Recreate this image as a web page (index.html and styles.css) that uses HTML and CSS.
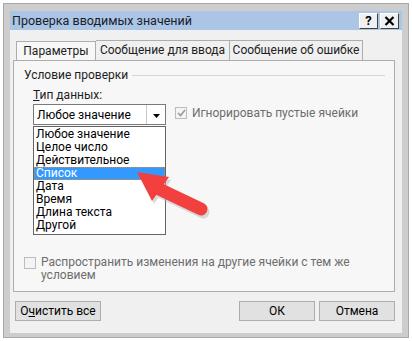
FILE: index.html
```html
<!DOCTYPE html>
<html lang="ru">
<head>
    <meta charset="UTF-8">
    <meta name="viewport" content="width=device-width, initial-scale=1.0">
    <title>Проверка вводимых значений</title>
    <link rel="stylesheet" href="styles.css">
</head>
<body>
    <div class="window">
        <div class="titlebar">
            <span class="title">Проверка вводимых значений</span>
            <div class="title-buttons">
                <span class="tbtn">?</span>
                <span class="tbtn">
                    <svg width="11" height="10" viewBox="0 0 11 10">
                        <path d="M1.5 1 L9.5 9 M9.5 1 L1.5 9" stroke="#000" stroke-width="2.2"/>
                    </svg>
                </span>
            </div>
        </div>

        <div class="client">
            <div class="tabs">
                <div class="tab active">Параметры</div>
                <div class="tab">Сообщение для ввода</div>
                <div class="tab">Сообщение об ошибке</div>
            </div>

            <div class="panel">
                <div class="group-title"><span>Условие проверки</span></div>
                <div class="type-label"><u>Т</u>ип данных:</div>

                <div class="type-row">
                    <div class="select-wrap">
                        <div class="select">
                            <span class="select-text">Любое значение</span>
                            <span class="select-btn">
                                <svg width="7" height="4" viewBox="0 0 7 4"><path d="M0 0 H7 L3.5 4 Z" fill="#000"/></svg>
                            </span>
                        </div>
                        <ul class="list">
                            <li>Любое значение</li>
                            <li>Целое число</li>
                            <li>Действительное</li>
                            <li class="selected">Список</li>
                            <li>Дата</li>
                            <li>Время</li>
                            <li>Длина текста</li>
                            <li>Другой</li>
                        </ul>
                    </div>
                    <div class="check disabled">
                        <span class="box">
                            <svg width="9" height="8" viewBox="0 0 9 8"><path d="M1 4 L3.5 6.5 L8 1" stroke="#9a9a9a" stroke-width="1.6" fill="none"/></svg>
                        </span>
                        <span>Игнорировать пустые ячейки</span>
                    </div>
                </div>

                <div class="check disabled spread">
                    <span class="box"></span>
                    <span>Распространить изменения на другие ячейки с тем же условием</span>
                </div>
            </div>

            <div class="footer">
                <button class="btn clear">О<u>ч</u>истить все</button>
                <button class="btn ok">ОК</button>
                <button class="btn cancel">Отмена</button>
            </div>
        </div>

        <!-- красная стрелка поверх списка -->
        <svg class="pointer" width="90" height="60" viewBox="0 0 90 60">
            <g transform="translate(2,3)" fill="#b9b9b9" opacity="0.5">
                <polygon points="2,2 34,7 17,31"/>
                <line x1="24" y1="19" x2="66" y2="39" stroke="#b9b9b9" stroke-width="13" stroke-linecap="round"/>
            </g>
            <polygon points="2,2 34,7 17,31" fill="#f2403e"/>
            <line x1="24" y1="19" x2="66" y2="39" stroke="#f2403e" stroke-width="13" stroke-linecap="round"/>
        </svg>
    </div>
</body>
</html>
```

FILE: styles.css
```css
* {
    box-sizing: border-box;
}

body {
    margin: 0;
    background: #ffffff;
    font-family: Roboto, 'Noto Sans', sans-serif;
    font-size: 12px;
    color: #000;
}

.window {
    position: relative;
    margin: 3px 0 0 3px;
    width: 406px;
    height: 335px;
    background: #cdcdcd;
    border: 1px solid #a8a8a8;
    padding: 7px 6px 4px 6px;
    display: flex;
    flex-direction: column;
}

.titlebar {
    height: 19px;
    background: #aac6e4;
    display: flex;
    align-items: center;
    justify-content: space-between;
    padding: 0 3px 0 2px;
}

.title {
    font-size: 12.5px;
    color: #1b1b2e;
}

.title-buttons {
    display: flex;
    gap: 2px;
}

.tbtn {
    width: 19px;
    height: 16px;
    background: #f0f0f0;
    border: 1px solid #fff;
    border-right-color: #404040;
    border-bottom-color: #404040;
    display: flex;
    align-items: center;
    justify-content: center;
    font-weight: bold;
    font-size: 13px;
    line-height: 1;
}

.client {
    flex: 1;
    background: #f0f0f0;
    padding: 10px 7px 0 3px;
    display: flex;
    flex-direction: column;
}

.tabs {
    display: flex;
    height: 20px;
    padding-left: 3px;
}

.tab {
    width: 134px;
    border: 1px solid #adadad;
    border-bottom: none;
    border-left: none;
    line-height: 19px;
    text-align: center;
    white-space: nowrap;
    background: #f0f0f0;
    color: #1e1e1e;
}

.tab:last-child {
    width: 133px;
}

.tab.active {
    width: 80px;
    border-left: 1px solid #adadad;
    background: #f7f7f7;
    position: relative;
    top: 1px;
}

.panel {
    position: relative;
    height: 232px;
    background: #f7f7f7;
    border: 1px solid #adadad;
    padding: 7px 0 0 0;
}

.group-title {
    display: flex;
    align-items: center;
    gap: 4px;
    padding: 0 9px 0 10px;
    line-height: 14px;
    color: #1e1e1e;
}

.group-title::after {
    content: "";
    flex: 1;
    border-top: 1px solid #d5d5d5;
}

.type-label {
    margin: 6px 0 0 19px;
    line-height: 14px;
    color: #1e1e1e;
}

.type-row {
    display: flex;
    gap: 9px;
    margin: 2px 0 0 19px;
}

.select-wrap {
    position: relative;
    width: 133px;
}

.select {
    height: 21px;
    background: #fff;
    border: 1px solid #7a7a7a;
    display: flex;
    align-items: center;
}

.select-text {
    flex: 1;
    padding-left: 3px;
}

.select-btn {
    width: 19px;
    height: 100%;
    border-left: 1px solid #c8c8c8;
    display: flex;
    align-items: center;
    justify-content: center;
    padding-top: 3px;
}

.list {
    position: absolute;
    top: 22px;
    left: 0;
    width: 133px;
    margin: 0;
    padding: 1px 0 2px;
    list-style: none;
    background: #fff;
    border: 1px solid #646464;
    z-index: 2;
}

.list li {
    height: 13px;
    line-height: 13px;
    padding-left: 2px;
}

.list li.selected {
    background: #3399ff;
    color: #fff;
    outline: 1px dotted #e08a2a;
    outline-offset: -1px;
}

.check {
    display: flex;
    align-items: flex-start;
    gap: 5px;
    line-height: 13px;
}

.check.disabled {
    color: #6d6d6d;
}

.check .box {
    flex: none;
    width: 12px;
    height: 12px;
    border: 1px solid #bcbcbc;
    background: #f4f4f4;
    display: flex;
    align-items: center;
    justify-content: center;
    margin-top: 3px;
}

.type-row .check {
    line-height: 18px;
}

.spread {
    margin: 131px 0 0 10px;
    width: 335px;
}

.spread .box {
    margin-top: 1px;
}

.footer {
    display: flex;
    gap: 4px;
    margin-top: 9px;
    padding-left: 2px;
}

.btn {
    height: 20px;
    background: #e1e1e1;
    border: 1px solid #adadad;
    font-family: inherit;
    font-size: 12px;
    color: #000;
    padding: 0;
}

.btn.clear {
    width: 86px;
    margin-right: auto;
}

.btn.ok,
.btn.cancel {
    width: 76px;
}

.pointer {
    position: absolute;
    left: 131px;
    top: 166px;
    z-index: 3;
}
```
